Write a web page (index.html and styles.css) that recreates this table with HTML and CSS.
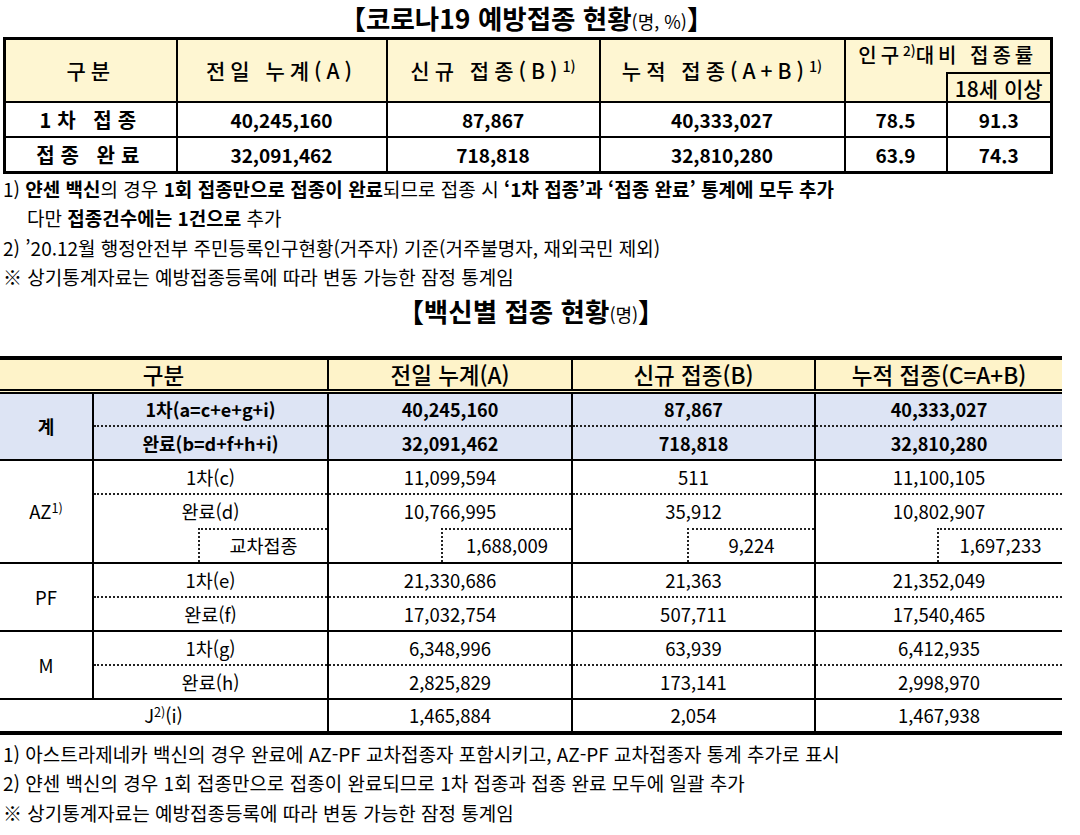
FILE: index.html
```html
<!DOCTYPE html>
<html lang="ko">
<head>
<meta charset="utf-8">
<title>코로나19 예방접종 현황</title>
<link rel="stylesheet" href="styles.css">
</head>
<body>
<div class="page">
  <h1 class="title title1">【코로나19 예방접종 현황<span class="unit">(명, %)</span>】</h1>
  <table class="t1">
    <colgroup>
      <col class="k1"><col class="k2"><col class="k3"><col class="k4"><col class="k5"><col class="k6">
    </colgroup>
    <thead>
      <tr class="h1">
        <th rowspan="2">구분</th>
        <th rowspan="2">전일 누계(A)</th>
        <th rowspan="2">신규 접종(B)<sup>1)</sup></th>
        <th rowspan="2">누적 접종(A+B)<sup>1)</sup></th>
        <th colspan="2" class="pop">인구<sup>2)</sup>대비 접종률</th>
      </tr>
      <tr class="h2">
        <th class="blank"></th>
        <th class="adult">18세 이상</th>
      </tr>
    </thead>
    <tbody>
      <tr>
        <td class="lbl">1차 접종</td>
        <td>40,245,160</td>
        <td>87,867</td>
        <td>40,333,027</td>
        <td>78.5</td>
        <td>91.3</td>
      </tr>
      <tr>
        <td class="lbl">접종 완료</td>
        <td>32,091,462</td>
        <td>718,818</td>
        <td>32,810,280</td>
        <td>63.9</td>
        <td>74.3</td>
      </tr>
    </tbody>
  </table>

  <div class="notes notes1">
    <p>1) <b>얀센 백신</b>의 경우 <b>1회 접종만으로 접종이 완료</b>되므로 접종 시 <b>‘1차 접종’과 ‘접종 완료’ 통계에 모두 추가</b></p>
    <p class="indent">다만 <b>접종건수에는 1건으로</b> 추가</p>
    <p>2) ’20.12월 행정안전부 주민등록인구현황(거주자) 기준(거주불명자, 재외국민 제외)</p>
    <p>※ 상기통계자료는 예방접종등록에 따라 변동 가능한 잠정 통계임</p>
  </div>

  <h2 class="title title2">【백신별 접종 현황<span class="unit">(명)</span>】</h2>

  <table class="t2">
    <colgroup>
      <col class="c1"><col class="c2"><col class="c3"><col class="c4"><col class="c5">
    </colgroup>
    <thead>
      <tr>
        <th colspan="2">구분</th>
        <th>전일 누계(A)</th>
        <th>신규 접종(B)</th>
        <th>누적 접종(C=A+B)</th>
      </tr>
    </thead>
    <tbody class="total">
      <tr>
        <td rowspan="2">계</td>
        <td>1차(a=c+e+g+i)</td>
        <td>40,245,160</td>
        <td>87,867</td>
        <td>40,333,027</td>
      </tr>
      <tr class="dot">
        <td>완료(b=d+f+h+i)</td>
        <td>32,091,462</td>
        <td>718,818</td>
        <td>32,810,280</td>
      </tr>
    </tbody>
    <tbody>
      <tr>
        <td rowspan="3">AZ<sup>1)</sup></td>
        <td>1차(c)</td>
        <td>11,099,594</td>
        <td>511</td>
        <td>11,100,105</td>
      </tr>
      <tr class="dot">
        <td>완료(d)</td>
        <td>10,766,995</td>
        <td>35,912</td>
        <td>10,802,907</td>
      </tr>
      <tr class="cross">
        <td><div class="box bx1">교차접종</div></td>
        <td><div class="box bx2">1,688,009</div></td>
        <td><div class="box bx3">9,224</div></td>
        <td><div class="box bx4">1,697,233</div></td>
      </tr>
    </tbody>
    <tbody>
      <tr>
        <td rowspan="2">PF</td>
        <td>1차(e)</td>
        <td>21,330,686</td>
        <td>21,363</td>
        <td>21,352,049</td>
      </tr>
      <tr class="dot">
        <td>완료(f)</td>
        <td>17,032,754</td>
        <td>507,711</td>
        <td>17,540,465</td>
      </tr>
    </tbody>
    <tbody>
      <tr>
        <td rowspan="2">M</td>
        <td>1차(g)</td>
        <td>6,348,996</td>
        <td>63,939</td>
        <td>6,412,935</td>
      </tr>
      <tr class="dot">
        <td>완료(h)</td>
        <td>2,825,829</td>
        <td>173,141</td>
        <td>2,998,970</td>
      </tr>
    </tbody>
    <tbody class="last">
      <tr>
        <td colspan="2">J<sup>2)</sup>(i)</td>
        <td>1,465,884</td>
        <td>2,054</td>
        <td>1,467,938</td>
      </tr>
    </tbody>
  </table>

  <div class="notes notes2">
    <p>1) 아스트라제네카 백신의 경우 완료에 AZ-PF 교차접종자 포함시키고, AZ-PF 교차접종자 통계 추가로 표시</p>
    <p>2) 얀센 백신의 경우 1회 접종만으로 접종이 완료되므로 1차 접종과 접종 완료 모두에 일괄 추가</p>
    <p>※ 상기통계자료는 예방접종등록에 따라 변동 가능한 잠정 통계임</p>
  </div>
</div>
</body>
</html>
```

FILE: styles.css
```css
* { box-sizing: border-box; }
html, body { margin: 0; padding: 0; background: #fff; }
body {
  font-family: "Noto Sans CJK KR", "Noto Sans", sans-serif;
  color: #000;
}
.page { width: 1080px; }

.title {
  margin: 0;
  font-size: 26.5px;
  font-weight: 700;
  text-align: center;
  white-space: nowrap;
}
.title .unit { font-size: 18px; font-weight: 400; }
.title1 { width: 1053px; height: 37px; line-height: 36px; }
.title2 { width: 1062px; height: 64px; line-height: 38px; }

sup { font-size: 0.68em; line-height: 0; vertical-align: 0.5em; letter-spacing: 0; }

/* Table 1 */
.t1 {
  margin-left: 3px;
  width: 1047px;
  border-collapse: collapse;
  table-layout: fixed;
  border: 3px solid #000;
}
.t1 .k1 { width: 172px; }
.t1 .k2 { width: 210px; }
.t1 .k3 { width: 213px; }
.t1 .k4 { width: 245px; }
.t1 .k5 { width: 102px; }
.t1 .k6 { width: 105px; }
.t1 th, .t1 td {
  border: 2px solid #000;
  padding: 0;
  text-align: center;
  white-space: nowrap;
}
.t1 th {
  background: #fef6d2;
  font-size: 21px;
  font-weight: 500;
  letter-spacing: 5px;
  padding-bottom: 2px;
}
.t1 .h1 { height: 34px; }
.t1 .h2 { height: 29px; }
.t1 .pop {
  border-bottom: none;
  vertical-align: top;
  line-height: 30px;
  font-size: 20px;
  letter-spacing: 4px;
}
.t1 .blank { border-top: none; }
.t1 .adult { letter-spacing: 0; font-size: 21px; line-height: 26px; padding: 0; }
.t1 tbody tr { height: 35px; }
.t1 td { font-size: 19px; font-weight: 700; }
.t1 td.lbl { letter-spacing: 6px; font-size: 20px; }

/* Notes */
.notes { font-size: 19px; line-height: 29.5px; }
.notes p { margin: 0; padding-left: 3px; white-space: nowrap; }
.notes b { font-weight: 700; }
.notes .indent { padding-left: 27px; }
.notes1 { margin-top: 0; }

/* Table 2 */
.t2 {
  width: 1062px;
  border-collapse: collapse;
  table-layout: fixed;
}
.t2 .c1 { width: 93px; }
.t2 .c2 { width: 235px; }
.t2 .c3 { width: 244px; }
.t2 .c4 { width: 243px; }
.t2 .c5 { width: 247px; }
.t2 th, .t2 td {
  padding: 0;
  text-align: center;
  white-space: nowrap;
  border-left: 2px solid #000;
  border-right: 2px solid #000;
}
.t2 tr > :first-child { border-left: none; }
.t2 tr > :last-child { border-right: none; }
.t2 tr.dot > :first-child,
.t2 tr.cross > :first-child { border-left: 2px solid #000; }
.t2 th {
  background: #fef3c9;
  font-size: 22.5px;
  font-weight: 500;
  height: 34px;
  line-height: 28px;
  border-top: 4px solid #000;
  border-bottom: 5px double #000;
}
.t2 td { font-size: 18.5px; font-weight: 400; height: 34px; line-height: 28px; }
.t2 tbody { border-top: 2px solid #000; }
.t2 .total td { background: #dde4f4; font-weight: 700; font-size: 18px; }
.t2 .total { border-top: 5px double #000; }
.t2 tr.dot td { border-top: 2px dotted #222; }
.t2 .last { border-bottom: 4px solid #000; }
.t2 .cross td { padding: 0; }
.t2 .box {
  height: 34px;
  line-height: 31px;
  border-top: 2px dotted #222;
  border-left: 2px dotted #222;
  text-align: center;
}
.t2 .bx1 { margin-left: 104px; }
.t2 .bx2 { margin-left: 112px; }
.t2 .bx3 { margin-left: 114px; }
.t2 .bx4 { margin-left: 121px; }

.notes2 { margin-top: 4px; }
```
